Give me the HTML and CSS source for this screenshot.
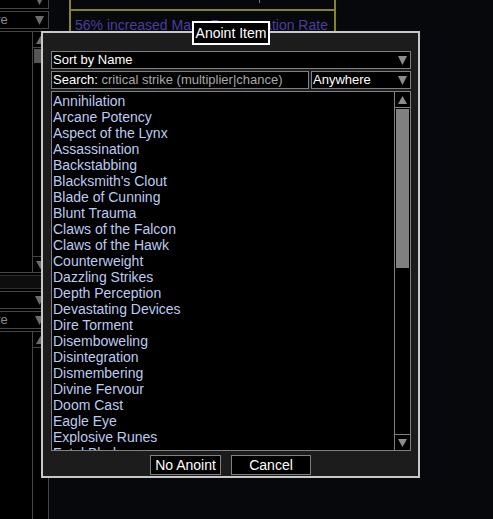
FILE: index.html
```html
<!DOCTYPE html>
<html>
<head>
<meta charset="utf-8">
<link rel="stylesheet" href="styles.css">
</head>
<body>
<div class="app">
  <aside class="sidebar">
    <div class="side-inner">
      <div class="sdd"><span></span><svg class="arr" width="9" height="9" viewBox="0 0 9 9"><polygon points="0,0 9,0 4.5,9"/></svg></div>
      <div class="sdd"><span>Anywhere</span><svg class="arr" width="9" height="9" viewBox="0 0 9 9"><polygon points="0,0 9,0 4.5,9"/></svg></div>
      <div class="slist slist-1">
        <div class="sscroll">
          <div class="sbtn"><svg class="arr" width="9" height="8" viewBox="0 0 9 8"><polygon points="0,8 9,8 4.5,0"/></svg></div>
          <div class="sthumb"></div>
          <div class="sfill"></div>
          <div class="sbtn sbtn-down"><svg class="arr" width="9" height="8" viewBox="0 0 9 8"><polygon points="0,0 9,0 4.5,8"/></svg></div>
        </div>
      </div>
      <div class="sband"></div>
      <div class="sdd"><span></span><svg class="arr" width="9" height="9" viewBox="0 0 9 9"><polygon points="0,0 9,0 4.5,9"/></svg></div>
      <div class="sdd"><span>Anywhere</span><svg class="arr" width="9" height="9" viewBox="0 0 9 9"><polygon points="0,0 9,0 4.5,9"/></svg></div>
      <div class="slist slist-2">
        <div class="sscroll">
          <div class="sbtn"><svg class="arr" width="9" height="8" viewBox="0 0 9 8"><polygon points="0,8 9,8 4.5,0"/></svg></div>
        </div>
      </div>
    </div>
  </aside>
  <main class="main">
    <div class="mod-box">
      <div class="mod-head"><span class="tick"></span></div>
      <div class="mod-line">56% increased Mana Regeneration Rate</div>
    </div>
  </main>
</div>

<div class="dialog">
  <div class="title">Anoint Item</div>
  <div class="dd"><span class="dd-text">Sort by Name</span><svg class="darr" width="9" height="9" viewBox="0 0 9 9"><polygon points="0,0 9,0 4.5,9"/></svg></div>
  <div class="search-row">
    <div class="search"><span class="label">Search:</span>&nbsp;<span class="query">critical strike (multiplier|chance)</span></div>
    <div class="dd dd-where"><span class="dd-text">Anywhere</span><svg class="darr" width="9" height="9" viewBox="0 0 9 9"><polygon points="0,0 9,0 4.5,9"/></svg></div>
  </div>
  <div class="list">
    <ul class="items">
      <li>Annihilation</li>
      <li>Arcane Potency</li>
      <li>Aspect of the Lynx</li>
      <li>Assassination</li>
      <li>Backstabbing</li>
      <li>Blacksmith's Clout</li>
      <li>Blade of Cunning</li>
      <li>Blunt Trauma</li>
      <li>Claws of the Falcon</li>
      <li>Claws of the Hawk</li>
      <li>Counterweight</li>
      <li>Dazzling Strikes</li>
      <li>Depth Perception</li>
      <li>Devastating Devices</li>
      <li>Dire Torment</li>
      <li>Disemboweling</li>
      <li>Disintegration</li>
      <li>Dismembering</li>
      <li>Divine Fervour</li>
      <li>Doom Cast</li>
      <li>Eagle Eye</li>
      <li>Explosive Runes</li>
      <li>Fatal Blade</li>
      <li>Feller of Foes</li>
    </ul>
    <div class="scroll">
      <div class="sc-btn"><svg class="darr" width="9" height="8" viewBox="0 0 9 8"><polygon points="4.5,0 9,8 0,8"/></svg></div>
      <div class="thumb"></div>
      <div class="track"></div>
      <div class="sc-btn sc-down"><svg class="darr" width="9" height="8" viewBox="0 0 9 8"><polygon points="0,0 9,0 4.5,8"/></svg></div>
    </div>
  </div>
  <div class="buttons">
    <div class="btn btn-none">No Anoint</div>
    <div class="btn btn-cancel">Cancel</div>
  </div>
</div>
</body>
</html>
```

FILE: styles.css
```css
* { box-sizing: border-box; }
html, body { margin: 0; padding: 0; }
body {
  width: 493px;
  height: 519px;
  overflow: hidden;
  background: #06080b;
  font-family: "Liberation Sans", Arial, sans-serif;
  position: relative;
}

/* background application */
.app { display: flex; height: 519px; }
.sidebar {
  width: 49px;
  flex: none;
  background: #000;
  overflow: hidden;
}
.side-inner {
  margin-left: -52px;
  width: 101px;
  margin-top: -9px;
  display: flex;
  flex-direction: column;
  gap: 2px;
}
.sdd {
  height: 18px;
  flex: none;
  border: 1px solid #464646;
  background: #000;
  display: flex;
  align-items: center;
  justify-content: space-between;
  padding: 0 4px 0 1px;
  color: #8a8a8a;
  font-size: 13px;
  line-height: 16px;
}
.arr { fill: #6c6c6c; display: block; }
.slist {
  flex: none;
  border: 1px solid #464646;
  display: flex;
  justify-content: flex-end;
}
.slist-1 { height: 242px; }
.slist-2 { height: 200px; }
.sscroll {
  width: 16px;
  border-left: 1px solid #464646;
  display: flex;
  flex-direction: column;
}
.sbtn {
  height: 16px;
  flex: none;
  border-bottom: 1px solid #464646;
  display: flex;
  align-items: center;
  justify-content: center;
}
.sbtn-down { border-bottom: 0; border-top: 1px solid #464646; }
.sthumb {
  height: 14px;
  margin: 1px 1px 0 1px;
  background: #555;
  flex: none;
}
.sfill { flex: 1; }
.sband {
  height: 14px;
  flex: none;
  background: #0e0e0e;
  border-top: 1px solid #2e2e2e;
  border-bottom: 1px solid #2e2e2e;
}

.main { flex: 1; }
.mod-box {
  margin-left: 20px;
  width: 267px;
  height: 120px;
  border-left: 2px solid #84842c;
  border-right: 2px solid #84842c;
}
.mod-head {
  height: 11px;
  border-bottom: 2px solid #84842c;
  padding-left: 188px;
}
.tick { display: block; width: 1px; height: 3px; background: #777; }
.mod-line {
  margin-top: 6px;
  padding-left: 4px;
  color: #4b3d9e;
  font-size: 14px;
  line-height: 16px;
  white-space: nowrap;
}

/* modal dialog */
.dialog {
  position: absolute;
  left: 41px;
  top: 31px;
  width: 379px;
  height: 447px;
  border: 2px solid #c8c8c8;
  background: #1c1c1c;
  padding: 18px 7px 0 8px;
  display: flex;
  flex-direction: column;
  gap: 2px;
}
.title {
  position: absolute;
  left: 149px;
  top: -12px;
  width: 78px;
  height: 24px;
  border: 2px solid #fff;
  background: #000;
  color: #fff;
  font-size: 14px;
  line-height: 20px;
  text-align: center;
  white-space: nowrap;
}
.dd {
  height: 18px;
  flex: none;
  border: 1px solid #808080;
  background: #000;
  display: flex;
  align-items: center;
  justify-content: space-between;
  padding: 0 3px 0 1px;
  color: #fff;
  font-size: 13px;
  line-height: 16px;
}
.darr { fill: #8c8c8c; display: block; }
.search-row {
  display: flex;
  gap: 2px;
  height: 18px;
  flex: none;
}
.search {
  width: 258px;
  height: 18px;
  border: 1px solid #808080;
  background: #000;
  padding: 0 1px;
  font-size: 13px;
  line-height: 16px;
  white-space: nowrap;
  overflow: hidden;
}
.label { color: #fff; }
.query { color: #a8a8a8; }
.dd-where { width: 100px; }

.list {
  height: 360px;
  flex: none;
  border: 1px solid #808080;
  background: #000;
  display: flex;
}
.items {
  flex: 1;
  margin: 0;
  padding: 1px 0 0 1px;
  list-style: none;
  overflow: hidden;
  color: #bccbf2;
  font-size: 14px;
  line-height: 16px;
}
.items li { white-space: nowrap; }
.scroll {
  width: 16px;
  flex: none;
  border-left: 1px solid #808080;
  display: flex;
  flex-direction: column;
}
.sc-btn {
  height: 16px;
  flex: none;
  border-bottom: 1px solid #808080;
  display: flex;
  align-items: center;
  justify-content: center;
}
.sc-down { border-bottom: 0; border-top: 1px solid #808080; }
.thumb {
  height: 159px;
  flex: none;
  margin: 1px 1px 0 1px;
  background: #808080;
}
.track { flex: 1; }

.buttons {
  margin-top: 2px;
  padding-left: 99px;
  display: flex;
  gap: 10px;
}
.btn {
  height: 20px;
  border: 1px solid #808080;
  background: #000;
  color: #fff;
  font-size: 14px;
  line-height: 18px;
  text-align: center;
  white-space: nowrap;
}
.btn-none { width: 71px; }
.btn-cancel { width: 80px; }
```
